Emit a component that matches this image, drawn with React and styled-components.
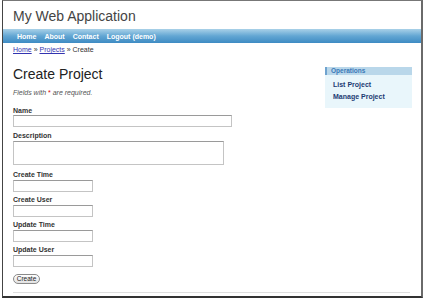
import React from 'react';
import styled, {createGlobalStyle} from 'styled-components';

const Global = createGlobalStyle`
  html, body { margin: 0; padding: 0; background: #fff; }
  body { font-family: "Liberation Sans", Arial, Helvetica, sans-serif; }
`;

const Frame = styled.div`
  margin-left: 2px;
  width: 418px;
  height: 295px;
  border-top: 1px solid #777;
  border-left: 1px solid #444;
  border-right: 2px solid #6a6a6a;
  border-bottom: 2px solid #333;
  display: flex;
  flex-direction: column;
  background: #fff;
`;

const Header = styled.div`
  padding: 7px 10px 5px;
  h1 {
    margin: 0;
    font-size: 14px;
    line-height: 16px;
    font-weight: normal;
    color: #444;
  }
`;

const Nav = styled.ul`
  margin: 0;
  height: 14px;
  padding: 0 0 0 10px;
  list-style: none;
  display: flex;
  align-items: center;
  background: linear-gradient(#a9d1e8, #62a6d3 50%, #3e8bc3);
`;

const NavItem = styled.li`
  padding: 0 4px;
  font-size: 7px;
  font-weight: bold;
  color: #fff;
`;

const Crumbs = styled.div`
  padding: 2px 10px 0;
  font-size: 7px;
  line-height: 10px;
  color: #333;
  a { color: #3434b0; text-decoration: underline; }
`;

const Body = styled.div`
  flex: 1;
  display: flex;
  padding: 0 9px 0 10px;
`;

const Main = styled.div`
  flex: 1;
  display: flex;
  flex-direction: column;
`;

const Title = styled.h2`
  margin: 11px 0 0;
  font-size: 14px;
  line-height: 16px;
  font-weight: normal;
  color: #222;
`;

const Note = styled.p`
  margin: 6px 0 0;
  font-size: 7px;
  line-height: 10px;
  font-style: italic;
  color: #555;
  span { color: #d00; font-style: normal; }
`;

const Form = styled.form`
  margin-top: 9px;
  display: flex;
  flex-direction: column;
  align-items: flex-start;
`;

const Field = styled.div`
  display: flex;
  flex-direction: column;
  margin-top: ${p => p.$gap}px;
`;

const Label = styled.label`
  font-size: 7px;
  line-height: 8px;
  font-weight: bold;
  color: #333;
`;

const Input = styled.input`
  box-sizing: border-box;
  width: ${p => p.$w}px;
  height: 12px;
  margin: ${p => p.$top || 0}px 0 0;
  padding: 0 2px;
  border: 1px solid #c4c4c4;
  border-top-color: #9a9a9a;
  background: #fff;
  outline: none;
`;

const TextArea = styled.textarea`
  box-sizing: border-box;
  width: 211px;
  height: 24px;
  margin: 1px 0 0;
  padding: 0;
  border: 1px solid #c4c4c4;
  border-top-color: #9a9a9a;
  resize: none;
`;

const Button = styled.button`
  margin-top: 7px;
  box-sizing: border-box;
  width: 27px;
  height: 10px;
  padding: 0;
  font-family: inherit;
  font-size: 6.5px;
  line-height: 8px;
  color: #222;
  border: 1px solid #8a8a8a;
  border-radius: 6px;
  background: linear-gradient(#fff, #e2e2e2);
`;

const Footer = styled.div`
  margin: 0 11px 3px 10px;
  border-top: 1px solid #dedede;
`;

const Side = styled.div`
  width: 87px;
  margin-top: 12px;
  align-self: flex-start;
  background: #e9f6fb;
  padding-bottom: 5px;
`;

const SideHead = styled.div`
  height: 8px;
  line-height: 8px;
  padding-left: 4px;
  border-left: 2px solid #6fa3cf;
  background: #b9d7ea;
  font-size: 6.5px;
  font-weight: bold;
  color: #3a79b8;
`;

const SideList = styled.ul`
  margin: 4px 0 0;
  padding: 0 0 0 8px;
  list-style: none;
`;

const SideItem = styled.li`
  font-size: 7px;
  line-height: 12px;
  font-weight: bold;
  color: #1c3b73;
`;

const fields = [
  {label: 'Create Time', gap: 6},
  {label: 'Create User', gap: 4},
  {label: 'Update Time', gap: 4},
  {label: 'Update User', gap: 4},
];

export default function App() {
  return (
    <>
      <Global />
      <Frame>
        <Header><h1>My Web Application</h1></Header>
        <Nav>
          {['Home', 'About', 'Contact', 'Logout (demo)'].map(n => <NavItem key={n}>{n}</NavItem>)}
        </Nav>
        <Crumbs><a>Home</a> » <a>Projects</a> » Create</Crumbs>
        <Body>
          <Main>
            <Title>Create Project</Title>
            <Note>Fields with <span>*</span> are required.</Note>
            <Form onSubmit={e => e.preventDefault()}>
              <Field $gap={0}>
                <Label>Name</Label>
                <Input $w={219} />
              </Field>
              <Field $gap={5}>
                <Label>Description</Label>
                <TextArea />
              </Field>
              {fields.map(f => (
                <Field key={f.label} $gap={f.gap}>
                  <Label>{f.label}</Label>
                  <Input $w={80} $top={1} />
                </Field>
              ))}
              <Button type="submit">Create</Button>
            </Form>
          </Main>
          <Side>
            <SideHead>Operations</SideHead>
            <SideList>
              <SideItem>List Project</SideItem>
              <SideItem>Manage Project</SideItem>
            </SideList>
          </Side>
        </Body>
        <Footer />
      </Frame>
    </>
  );
}
